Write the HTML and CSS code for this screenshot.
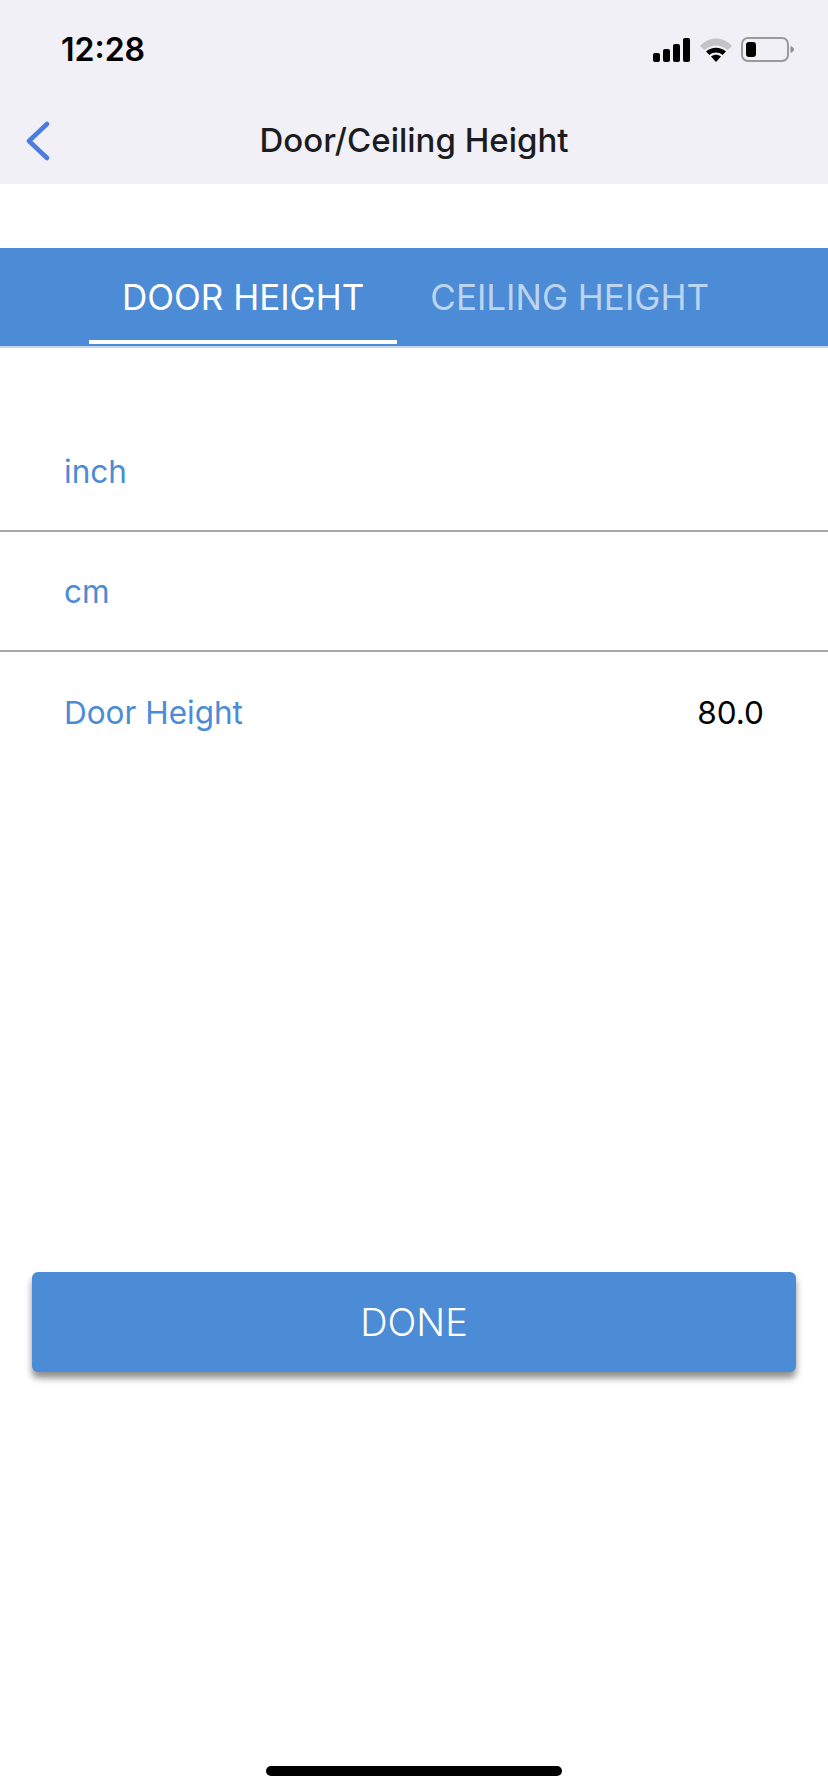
FILE: index.html
```html
<!DOCTYPE html>
<html lang="en">
<head>
    <meta charset="UTF-8">
    <meta name="viewport" content="width=device-width, initial-scale=1.0">
    <title>Door/Ceiling Height</title>
    <link rel="stylesheet" href="styles.css">
</head>
<body>
<div class="top-bar">
    <div class="status">
        <span class="time">12:28</span>
        <div class="status-icons">
            <svg class="signal" width="38" height="24" viewBox="0 0 38 24">
                <rect x="0" y="15" width="7" height="9" rx="2"/>
                <rect x="10" y="11" width="7" height="13" rx="2"/>
                <rect x="20" y="6" width="7" height="18" rx="2"/>
                <rect x="30" y="0" width="7" height="24" rx="2"/>
            </svg>
            <svg class="wifi" width="32" height="24" viewBox="0 0 32 24">
                <path d="M0 8 C9 -2 23 -2 32 8 L27.500 12 C20 6 12 6 4.500 12 Z" fill="#c4c4c7"/>
                <path d="M6 13.500 C12 8.500 20 8.500 26 13.500 L22.500 17 C18.500 13.800 13.500 13.800 9.500 17 Z"/>
                <path d="M11 18.500 C14 16.200 18 16.200 21 18.500 L16 24 Z"/>
            </svg>
            <svg class="battery" width="54" height="26" viewBox="0 0 54 26">
                <rect x="1" y="1" width="46" height="23" rx="6" fill="none" stroke="#9a9a9c" stroke-width="2"/>
                <rect x="5" y="5" width="10" height="15" rx="3"/>
                <path d="M49.500 9 C52 10 53 11.500 53 12.500 C53 13.500 52 15 49.500 16 Z" fill="#8e8e90"/>
            </svg>
        </div>
    </div>
    <div class="nav">
        <svg class="back" width="24" height="40" viewBox="0 0 24 40">
            <path d="M21 3 L3 20 L21 37" fill="none" stroke="#4a7de2" stroke-width="4.500" stroke-linecap="round" stroke-linejoin="round"/>
        </svg>
        <h1 class="nav-title">Door/Ceiling Height</h1>
    </div>
</div>

<div class="tabs">
    <div class="tab active">DOOR HEIGHT</div>
    <div class="tab">CEILING HEIGHT</div>
</div>

<div class="rows">
    <div class="row"><span class="row-label">inch</span></div>
    <div class="row"><span class="row-label">cm</span></div>
    <div class="row last"><span class="row-label">Door Height</span><span class="row-value">80.0</span></div>
</div>

<button class="done" type="button">DONE</button>

<div class="home-bar"></div>
</body>
</html>
```

FILE: styles.css
```css
html,
body {
    height: 100%;
}

body {
    font-family: Inter, "Noto Sans", sans-serif;
    margin: 0;
    padding: 0;
    background-color: #fff;
    display: flex;
    flex-direction: column;
    box-sizing: border-box;
    height: 1792px;
    overflow: hidden;
}

.top-bar {
    background-color: #f0f0f6;
    height: 184px;
    flex-shrink: 0;
}

.status {
    height: 98px;
    display: flex;
    align-items: center;
    justify-content: space-between;
    padding: 0 33px 0 61px;
}

.time {
    font-size: 32px;
    font-weight: 600;
    color: #000;
}

.status-icons {
    display: flex;
    align-items: center;
    gap: 9px;
    padding-top: 2px;
}

.signal,
.wifi {
    fill: #000;
}

.nav {
    height: 84px;
    display: flex;
    align-items: center;
    position: relative;
    justify-content: center;
}

.back {
    position: absolute;
    left: 26px;
    top: 23px;
}

.nav-title {
    margin: 0;
    font-size: 33px;
    font-weight: 500;
    color: #1c1c1e;
}

.tabs {
    margin-top: 64px;
    height: 100px;
    box-sizing: border-box;
    padding-left: 89px;
    background-color: #4c8bd5;
    border-bottom: 2px solid #c2d8f0;
    display: flex;
    flex-shrink: 0;
}

.tab {
    padding: 0 33px;
    height: 96px;
    box-sizing: border-box;
    line-height: 98px;
    font-size: 35px;
    color: #bdd4ee;
}

.tab.active {
    color: #fff;
    border-bottom: 4px solid #fff;
}

.rows {
    margin-top: 64px;
}

.row {
    height: 120px;
    box-sizing: border-box;
    padding: 0 64px;
    border-bottom: 2px solid #a8a8a8;
    display: flex;
    align-items: center;
    justify-content: space-between;
    font-size: 31.500px;
}

.row.last {
    border-bottom: none;
}

.row-label {
    color: #4c8bd5;
}

.row-value {
    color: #000;
}

.done {
    margin: 500px 32px 0;
    height: 100px;
    flex-shrink: 0;
    background-color: #4c8bd5;
    color: #fff;
    border: none;
    border-radius: 6px;
    font-family: Inter, sans-serif;
    font-size: 38px;
    font-weight: 300;
    box-shadow: 0 6px 7px rgba(0, 0, 0, 0.45);
}

.home-bar {
    margin: auto auto 16px;
    width: 296px;
    height: 10px;
    border-radius: 5px;
    background-color: #000;
    flex-shrink: 0;
}
```
